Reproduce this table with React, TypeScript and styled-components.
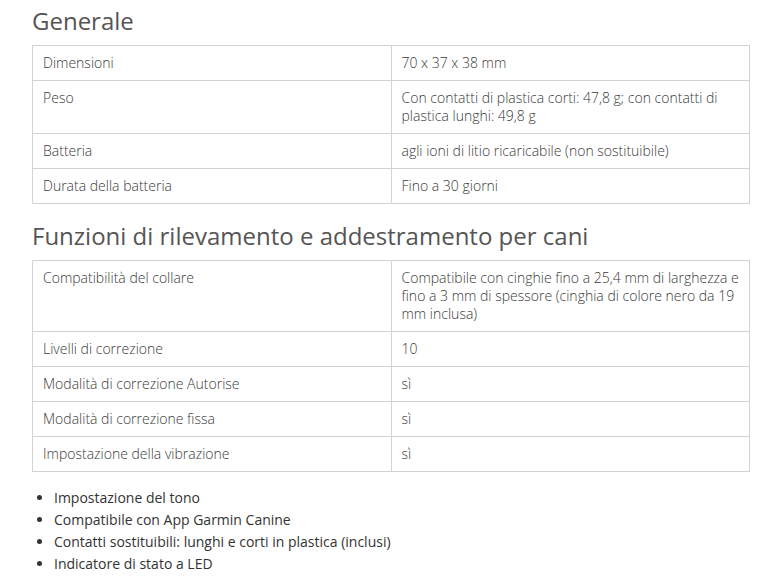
import React from 'react'
import styled, { createGlobalStyle } from 'styled-components'

interface SpecRow {
    label: string
    value: string
}

const general: SpecRow[] = [
    { label: 'Dimensioni', value: '70 x 37 x 38 mm' },
    { label: 'Peso', value: 'Con contatti di plastica corti: 47,8 g; con contatti di plastica lunghi: 49,8 g' },
    { label: 'Batteria', value: 'agli ioni di litio ricaricabile (non sostituibile)' },
    { label: 'Durata della batteria', value: 'Fino a 30 giorni' },
]

const training: SpecRow[] = [
    { label: 'Compatibilità del collare', value: 'Compatibile con cinghie fino a 25,4 mm di larghezza e fino a 3 mm di spessore (cinghia di colore nero da 19 mm inclusa)' },
    { label: 'Livelli di correzione', value: '10' },
    { label: 'Modalità di correzione Autorise', value: 'sì' },
    { label: 'Modalità di correzione fissa', value: 'sì' },
    { label: 'Impostazione della vibrazione', value: 'sì' },
]

const features = [
    'Impostazione del tono',
    'Compatibile con App Garmin Canine',
    'Contatti sostituibili: lunghi e corti in plastica (inclusi)',
    'Indicatore di stato a LED',
]

const SpecTable: React.FC<{ rows: SpecRow[] }> = ({ rows }) => (
    <Table>
        <tbody>
            {rows.map(row => (
                <tr key={row.label}>
                    <Cell>{row.label}</Cell>
                    <Cell>{row.value}</Cell>
                </tr>
            ))}
        </tbody>
    </Table>
)

const App: React.FC = () => (
    <Page>
        <GlobalStyle />
        <Heading first>Generale</Heading>
        <SpecTable rows={general} />

        <Heading>Funzioni di rilevamento e addestramento per cani</Heading>
        <SpecTable rows={training} />

        <FeatureList>
            {features.map(f => <li key={f}>{f}</li>)}
        </FeatureList>
    </Page>
)

const GlobalStyle = createGlobalStyle`
    body {
        margin: 0;
        background: #ffffff;
        font-family: "Open Sans", "Liberation Sans", sans-serif;
    }
`

const Page = styled.div`
    padding: 0 12px 20px 32px;
`

const Heading = styled.h2<{ first?: boolean }>`
    margin: ${p => (p.first ? '6px' : '17px')} 0 9px;
    font-size: 24px;
    line-height: 30px;
    font-weight: 400;
    color: #555555;
`

const Table = styled.table`
    width: 100%;
    border-collapse: collapse;
    table-layout: fixed;
    border: 1px solid #d2d2d2;
`

const Cell = styled.td`
    width: 50%;
    padding: 8px 10px;
    border: 1px solid #d2d2d2;
    vertical-align: top;
    font-size: 14px;
    line-height: 18px;
    font-weight: 300;
    color: #3a3a3a;
`

const FeatureList = styled.ul`
    margin: 15px 0 0;
    padding-left: 22px;
    list-style: disc;
    font-size: 14px;
    line-height: 22px;
    color: #333333;
`

export default App
